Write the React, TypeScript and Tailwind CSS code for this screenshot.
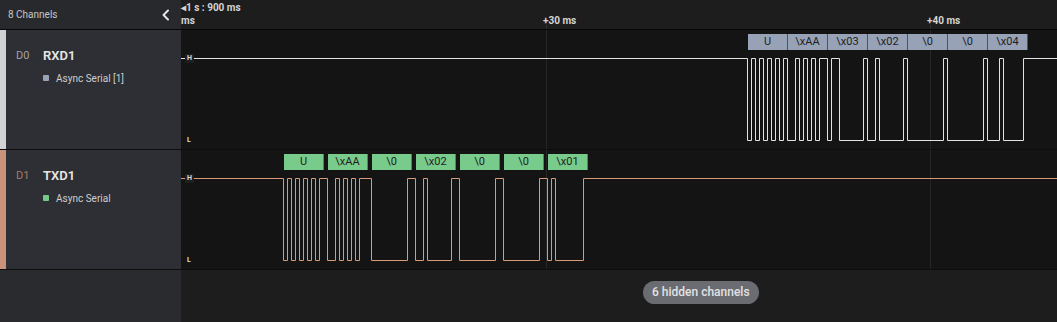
import React from "react";

const BIT = 4;
const HIGH_Y = 28.5;
const LOW_Y = 110.5;
const WAVE_W = 876;

type Channel = {
  id: string;
  name: string;
  analyzer: string;
  bar: string;
  idColor: string;
  dot: string;
  stroke: string;
  boxBg: string;
  boxBorder: string;
  start: number;
  frameBits: number;
  bytes: number[];
  labels: string[];
};

const channels: Channel[] = [
  {
    id: "D0",
    name: "RXD1",
    analyzer: "Async Serial [1]",
    bar: "bg-[#d2d2d2]",
    idColor: "text-[#a3a3a3]",
    dot: "bg-[#9aa3b4]",
    stroke: "#e2e2e2",
    boxBg: "bg-[#97a2b7]",
    boxBorder: "border-[#4d5361]",
    start: 566.5,
    frameBits: 10,
    bytes: [0x55, 0xaa, 0x03, 0x02, 0x00, 0x00, 0x04],
    labels: ["U", "\\xAA", "\\x03", "\\x02", "\\0", "\\0", "\\x04"],
  },
  {
    id: "D1",
    name: "TXD1",
    analyzer: "Async Serial",
    bar: "bg-[#c8937a]",
    idColor: "text-[#a97a63]",
    dot: "bg-[#74c888]",
    stroke: "#d99b76",
    boxBg: "bg-[#79cb8c]",
    boxBorder: "border-[#4f8a5e]",
    start: 102.5,
    frameBits: 11,
    bytes: [0x55, 0xaa, 0x00, 0x02, 0x00, 0x00, 0x01],
    labels: ["U", "\\xAA", "\\0", "\\x02", "\\0", "\\0", "\\x01"],
  },
];

// build a UART (8N1) wave path, idle high
const wavePath = (ch: Channel) => {
  const bits: number[] = [];
  ch.bytes.forEach((b) => {
    bits.push(0);
    for (let i = 0; i < 8; i++) bits.push((b >> i) & 1);
    bits.push(1);
    if (ch.frameBits === 11) bits.push(1);
  });
  let level = 1;
  let d = `M0 ${HIGH_Y}`;
  bits.forEach((bit, i) => {
    if (bit !== level) {
      const x = ch.start + i * BIT;
      const yFrom = level ? HIGH_Y : LOW_Y;
      const yTo = bit ? HIGH_Y : LOW_Y;
      d += ` L${x} ${yFrom} L${x} ${yTo}`;
      level = bit;
    }
  });
  d += ` L${WAVE_W} ${level ? HIGH_Y : LOW_Y}`;
  return d;
};

const ChevronLeft = () => (
  <svg width="10" height="12" viewBox="0 0 10 12" fill="none">
    <path d="M7 1.5 L2.5 6 L7 10.5" stroke="#e6e6e6" strokeWidth="2" strokeLinecap="round" strokeLinejoin="round" />
  </svg>
);

const ChannelRow = ({ ch }: { ch: Channel }) => {
  const step = ch.frameBits * BIT;
  return (
    <div className="flex h-[120px] border-b border-[#0d0d0d]">
      <div className="flex w-[181px] shrink-0 bg-[#2e2f34]">
        <div className={`w-[6px] ${ch.bar}`} />
        <div className="flex flex-col pl-[10px] pt-[16px]">
          <div className="flex items-center">
            <span className={`w-[27px] text-[11px] ${ch.idColor}`}>{ch.id}</span>
            <span className="text-[13px] font-semibold text-[#e6e6e6]">{ch.name}</span>
          </div>
          <div className="mt-[5px] flex items-center pl-[27px]">
            <span className={`h-[6px] w-[6px] rounded-[1px] ${ch.dot}`} />
            <span className="ml-[7px] text-[10px] text-[#cdcdcd]">{ch.analyzer}</span>
          </div>
        </div>
      </div>
      <div className="relative flex-1 overflow-hidden bg-[#141414]">
        <div className="absolute left-[365px] top-0 h-full w-px bg-[#262626]" />
        <div className="absolute left-[749px] top-0 h-full w-px bg-[#262626]" />
        <svg className="absolute left-0 top-0" width={WAVE_W} height={119}>
          <path d={wavePath(ch)} fill="none" stroke={ch.stroke} strokeWidth="1" />
        </svg>
        <div className="absolute left-[4px] top-[24px] bg-[#1f1f1f] px-[2px] text-[7px] font-bold leading-[9px] text-[#dcdcdc]">
          H
        </div>
        <div className="absolute left-[6px] top-[106px] text-[7px] font-bold leading-[9px] text-[#dcdcdc]">
          L
        </div>
        {ch.labels.map((label, i) => (
          <div
            key={i}
            className={`absolute top-[4px] flex h-[16px] w-[40px] items-center justify-center border-r text-[11px] text-[#1e1e1e] ${ch.boxBg} ${ch.boxBorder}`}
            style={{ left: Math.floor(ch.start) + 1 + i * step }}
          >
            {label}
          </div>
        ))}
      </div>
    </div>
  );
};

export default function App() {
  return (
    <div className="flex h-[322px] w-full flex-col overflow-hidden bg-[#1d1d1d] font-['Roboto',sans-serif]">
      <div className="flex h-[30px] shrink-0 border-b border-[#080808]">
        <div className="flex w-[181px] shrink-0 items-center justify-between bg-[#28292d] pl-[8px] pr-[10px]">
          <span className="text-[10px] text-[#c6c6c6]">8 Channels</span>
          <ChevronLeft />
        </div>
        <div className="relative flex-1 bg-[#1d1d1d] text-[10px] font-bold leading-[12px] text-[#d4d4d4]">
          <div className="absolute left-0 top-[2px]">◂1 s : 900 ms</div>
          <div className="absolute left-0 top-[15px]">ms</div>
          <div className="absolute left-[362px] top-[15px]">+30 ms</div>
          <div className="absolute left-[746px] top-[15px]">+40 ms</div>
          <div className="absolute bottom-0 left-[365px] h-[4px] w-px bg-[#333]" />
          <div className="absolute bottom-0 left-[749px] h-[4px] w-px bg-[#333]" />
        </div>
      </div>
      {channels.map((ch) => (
        <ChannelRow key={ch.id} ch={ch} />
      ))}
      <div className="flex flex-1">
        <div className="w-[181px] shrink-0 bg-[#2a2b2f]" />
        <div className="flex-1 pl-[462px] pt-[9px]">
          <div className="inline-flex h-[23px] items-center rounded-full bg-[#6b6c72] px-[9px] text-[12px] font-medium text-[#e2e2e2]">
            6 hidden channels
          </div>
        </div>
      </div>
    </div>
  );
}
